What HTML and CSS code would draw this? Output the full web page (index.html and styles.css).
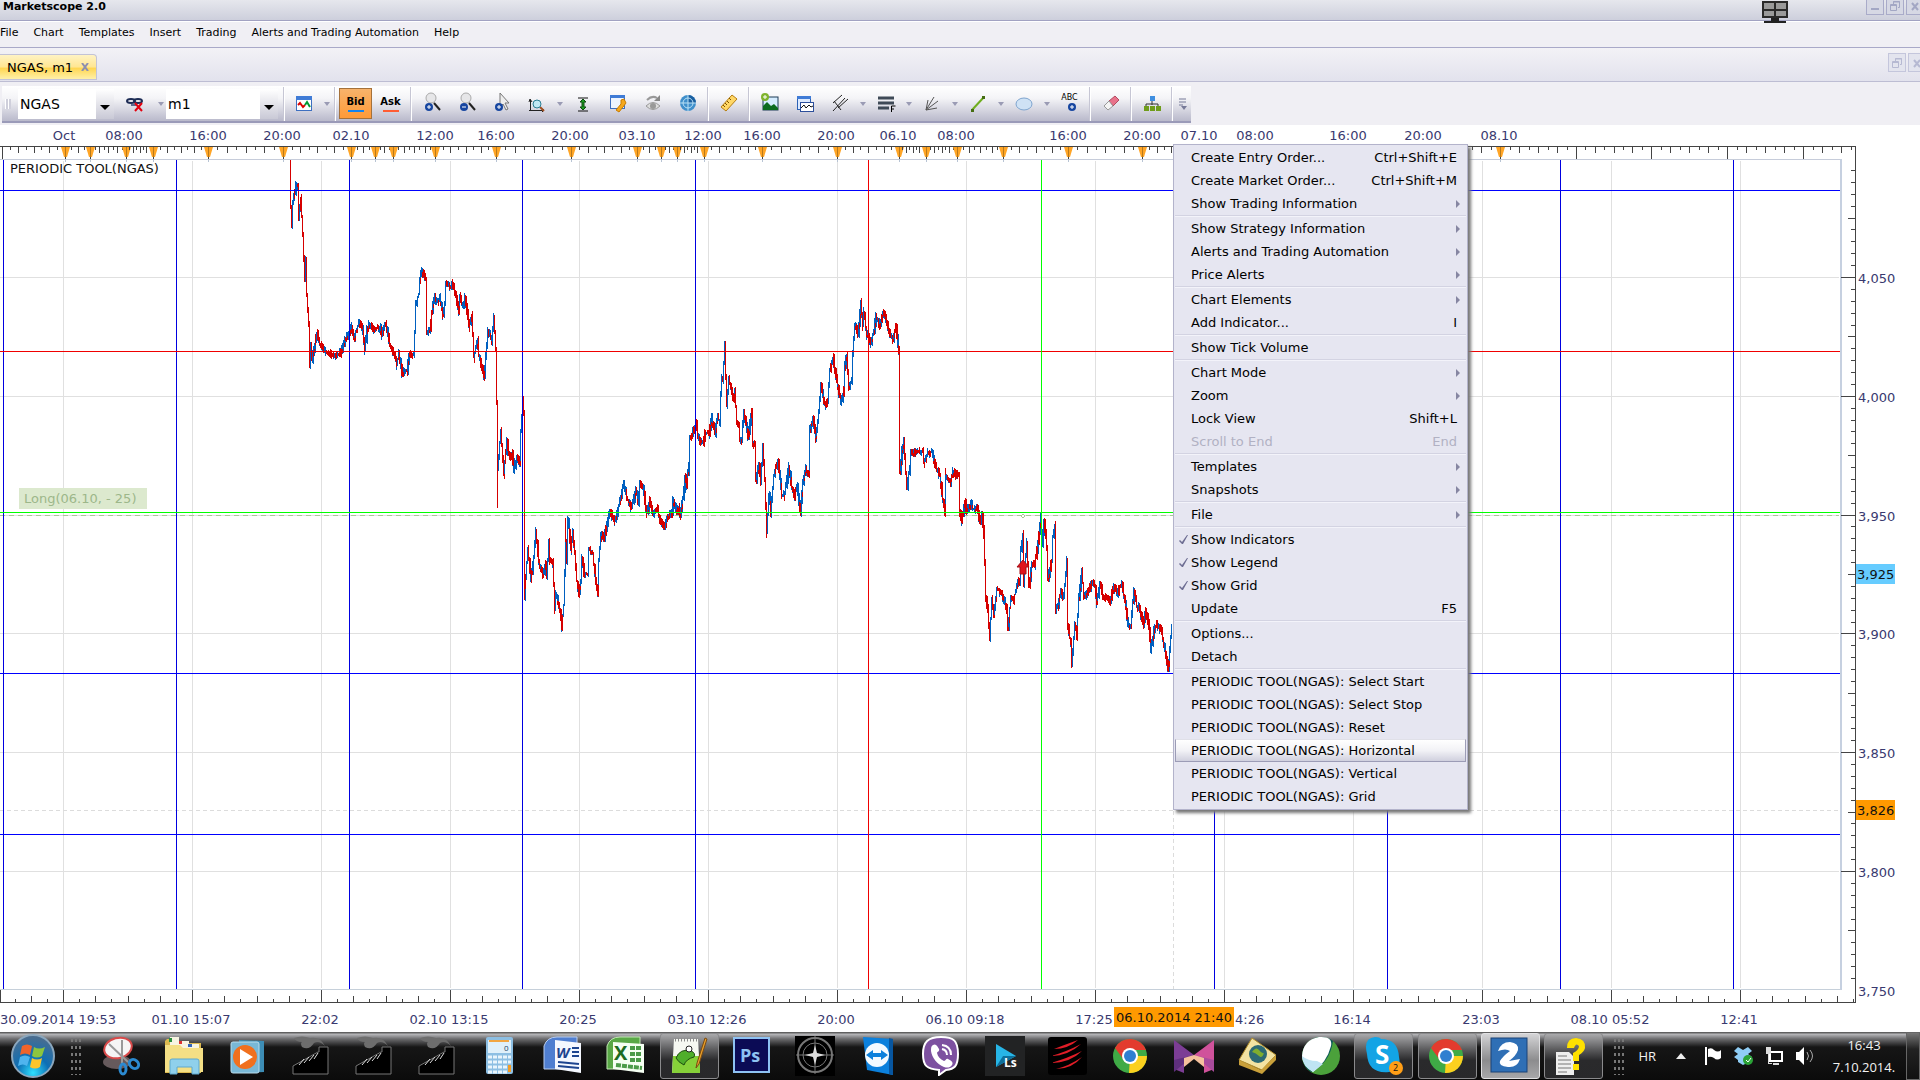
FILE: index.html
```html
<!DOCTYPE html>
<html lang="en">
<head>
  <meta charset="UTF-8" />
  <meta name="viewport" content="width=device-width, initial-scale=1" />
  <title>Marketscope 2.0</title>
  <link rel="stylesheet" href="styles.css">
</head>
<body>

<header class="titlebar">
  <h1>Marketscope 2.0</h1>
  <svg class="monitor" width="26" height="24" viewBox="0 0 26 24">
    <rect x="0" y="1" width="26" height="17" fill="#2a2a2a"/>
    <path d="M2 3h10v6H2zM14 3h10v6H14zM2 11h10v5H2zM14 11h10v5H14z" fill="#9a9a9a"/>
    <path d="M9 18h8v3h7v2H2v-2h7z" fill="#222"/>
  </svg>
  <div class="win-buttons">
    <button aria-label="Minimize"><svg width="12" height="12"><path d="M2 8h8v2H2z" fill="#a3a7c4"/></svg></button>
    <button aria-label="Restore"><svg width="12" height="12" fill="none" stroke="#a3a7c4"><path d="M4.500 4V1.500h6v6H9M4 2h7M1.500 4.500h6v6h-6zM1 5.500h7"/></svg></button>
    <button aria-label="Close"><svg width="12" height="12"><path d="M3 3l6 7M9 3l-6 7" stroke="#a3a7c4" stroke-width="2"/></svg></button>
  </div>
</header>

<nav class="menubar">
  <a href="#">File</a>
  <a href="#">Chart</a>
  <a href="#">Templates</a>
  <a href="#">Insert</a>
  <a href="#">Trading</a>
  <a href="#">Alerts and Trading Automation</a>
  <a href="#">Help</a>
</nav>

<div class="tabs">
  <div class="tab">
    <span>NGAS, m1</span>
    <button aria-label="Close tab"><svg width="8" height="8"><path d="M1 0l6 8M7 0L1 8" stroke="#8d8fae" stroke-width="2"/></svg></button>
  </div>
  <div class="win-buttons faded">
    <button aria-label="Restore chart"><svg width="12" height="12" fill="none" stroke="#b6b9d2"><path d="M4.500 4V1.500h6v6H9M4 2h7M1.500 4.500h6v6h-6zM1 5.500h7"/></svg></button>
    <button aria-label="Close chart"><svg width="12" height="12"><path d="M3 3l6 7M9 3l-6 7" stroke="#b6b9d2" stroke-width="2"/></svg></button>
  </div>
</div>

<div class="toolbar-row">
  <div class="toolbar">
    <span class="grip"></span>
    <select class="symbol" aria-label="Symbol"><option>NGAS</option></select>
    <button class="tool link" aria-label="Unlink"><svg width="24" height="24" viewBox="0 0 24 24">
      <g fill="none" stroke="#1d2c55" stroke-width="2"><ellipse cx="8" cy="9" rx="4" ry="2"/><ellipse cx="15" cy="9" rx="4" ry="2"/><path d="M8 13h6" stroke="#5a6a90"/></g>
      <path d="M12 11l7 8M19 11l-7 8" stroke="#e3000f" stroke-width="2"/></svg></button>
    <button class="drop" aria-label="Link options"></button>
    <select class="period" aria-label="Period"><option>m1</option></select>
    <span class="sep wide"></span>
    <button class="tool" aria-label="Chart type"><svg width="24" height="24" viewBox="0 0 24 24">
      <rect x="4.500" y="4.500" width="15" height="14" fill="#fff" stroke="#3d6fc0"/><path d="M4 4h16v4H4z" fill="#3f7bd6"/>
      <path d="M6 13l2-2 3 4 2-2" fill="none" stroke="#d00" stroke-width="2"/><path d="M13 13l2-3 3 5" fill="none" stroke="#093" stroke-width="2"/></svg></button>
    <button class="drop" aria-label="Chart type options"></button>
    <span class="sep"></span>
    <button class="price bid">Bid</button>
    <button class="price ask">Ask</button>
    <span class="sep"></span>
    <button class="tool" aria-label="Zoom in"><svg width="24" height="24" viewBox="0 0 24 24">
      <path d="M14 11l6 7" stroke="#222" stroke-width="2"/><circle cx="11" cy="6" r="5" fill="#e6e6e8" stroke="#aaa"/>
      <circle cx="9" cy="15" r="4" fill="#1746a0"/><path d="M7 15h4M9 13v4" stroke="#fff"/></svg></button>
    <button class="tool" aria-label="Zoom out"><svg width="24" height="24" viewBox="0 0 24 24">
      <path d="M14 11l6 7" stroke="#222" stroke-width="2"/><circle cx="11" cy="6" r="5" fill="#e6e6e8" stroke="#aaa"/>
      <circle cx="9" cy="15" r="4" fill="#1746a0"/><path d="M7 15h4" stroke="#fff"/></svg></button>
    <button class="tool" aria-label="Select"><svg width="24" height="24" viewBox="0 0 24 24">
      <path d="M10 1v14l3-3 3 6 2-1-3-6h4z" fill="#eee" stroke="#777"/>
      <circle cx="9" cy="15" r="4" fill="#1746a0"/><path d="M7 15h4M9 13v4" stroke="#fff"/></svg></button>
    <button class="tool" aria-label="Scale"><svg width="24" height="24" viewBox="0 0 24 24">
      <path d="M5.500 8v11M4 10l1-3 2 3M4 18.500h14M17 17l2 1-2 2" fill="none" stroke="#222"/>
      <path d="M15 15l4 4" stroke="#a05020" stroke-width="2"/><circle cx="12" cy="12" r="4" fill="#bfe8f4" stroke="#2b7f94"/></svg></button>
    <button class="drop" aria-label="Scale options"></button>
    <button class="tool" aria-label="Fit height"><svg width="24" height="24" viewBox="0 0 24 24">
      <path d="M7 6h10M7 19h10" stroke="#111"/><path d="M12 7l3 3h-2v5h2l-3 3-3-3h2v-5H9z" fill="#1d9a22" stroke="#0b4d0d"/></svg></button>
    <button class="tool" aria-label="Properties"><svg width="24" height="24" viewBox="0 0 24 24">
      <rect x="4.500" y="3.500" width="14" height="13" fill="#eef5ff" stroke="#3d6fc0"/><path d="M4 3h15v3H4z" fill="#3f7bd6"/>
      <path d="M10 18l5-6V8l3-1 2 4-3 4-4 5z" fill="#f5a81c" stroke="#c97c00"/></svg></button>
    <button class="tool" aria-label="Show or hide"><svg width="24" height="24" viewBox="0 0 24 24">
      <path d="M5 14q7-7 14 0-7 7-14 0z" fill="#ddd" stroke="#999"/><circle cx="12" cy="14" r="3" fill="#999"/>
      <path d="M6 8q5-5 10-2" fill="none" stroke="#999" stroke-width="2"/><path d="M19 3v6h-6z" fill="#888"/></svg></button>
    <button class="tool" aria-label="Web"><svg width="24" height="24" viewBox="0 0 24 24">
      <circle cx="12" cy="11" r="8" fill="#3f8fcb"/><path d="M12 3a8 8 0 0 1 8 8h-8z" fill="#1a5fa0"/>
      <g fill="none" stroke="#b8e0f5"><circle cx="12" cy="11" r="5"/><path d="M4 11h16M12 3v16"/></g></svg></button>
    <span class="sep"></span>
    <button class="tool" aria-label="Ruler"><svg width="24" height="24" viewBox="0 0 24 24">
      <path d="M15 3l5 4L9 19l-5-4z" fill="#ffd766" stroke="#b57d12"/><path d="M12 6l2 2M10 9l2 2M8 11l2 2M6 13l2 2" stroke="#7b5200"/></svg></button>
    <span class="sep"></span>
    <button class="tool" aria-label="Add picture"><svg width="24" height="24" viewBox="0 0 24 24">
      <rect x="5" y="5" width="15" height="13" fill="#d5ecff" stroke="#1c3a55"/><path d="M5 18v-4l4-4 4 4 3-2 4 4v2z" fill="#0b6b1f"/>
      <circle cx="7" cy="5" r="4" fill="#7fb32d"/><path d="M5 5h4M7 3v4" stroke="#fff"/></svg></button>
    <button class="tool" aria-label="Add indicator"><svg width="24" height="24" viewBox="0 0 24 24">
      <rect x="4.500" y="4.500" width="13" height="13" fill="#dceaff" stroke="#2c61b5"/><path d="M4 4h14v3H4z" fill="#3f7bd6"/>
      <rect x="7.500" y="10.500" width="13" height="9" fill="#fff" stroke="#2c4f9b"/><path d="M8 16l3-3 2 3 3-3 2 2 2-1" fill="none" stroke="#111"/></svg></button>
    <button class="tool" aria-label="Pitchfork"><svg width="24" height="24" viewBox="0 0 24 24">
      <path d="M5 11L14 3M10 16L20 7M5 19L17 6M6 9l7 9" stroke="#222"/></svg></button>
    <button class="drop" aria-label="Pitchfork options"></button>
    <button class="tool" aria-label="Fibonacci"><svg width="24" height="24" viewBox="0 0 24 24">
      <path d="M4 6h16M4 11h16M4 16h11" stroke="#3f4a57" stroke-width="3"/><path d="M17.500 20v-6h4M17 17h3" fill="none" stroke="#000"/></svg></button>
    <button class="drop" aria-label="Fibonacci options"></button>
    <button class="tool" aria-label="Fan"><svg width="24" height="24" viewBox="0 0 24 24">
      <path d="M6 18L8 8M6 18l8-13M6 18l12-9M6 18l11-2" stroke="#555"/></svg></button>
    <button class="drop" aria-label="Fan options"></button>
    <button class="tool" aria-label="Line"><svg width="24" height="24" viewBox="0 0 24 24">
      <path d="M6 18L18 5" stroke="#6fae1e" stroke-width="2"/><path d="M5 17h3v3H5zM16 4h3v3h-3z" fill="#456d12"/></svg></button>
    <button class="drop" aria-label="Line options"></button>
    <button class="tool" aria-label="Ellipse"><svg width="24" height="24" viewBox="0 0 24 24">
      <ellipse cx="12" cy="12" rx="8" ry="6" fill="#cfe2f5" stroke="#7fa5cf"/></svg></button>
    <button class="drop" aria-label="Ellipse options"></button>
    <button class="tool abc" aria-label="Label"><span>ABC</span><svg width="12" height="12" viewBox="0 0 12 12">
      <circle cx="8" cy="5" r="4" fill="#1746a0"/><path d="M6 5h4M8 3v4" stroke="#fff"/></svg></button>
    <span class="sep"></span>
    <button class="tool" aria-label="Eraser"><svg width="24" height="24" viewBox="0 0 24 24">
      <path d="M10 9l6-5 4 4-6 6z" fill="#e8728a" stroke="#b34a60"/><path d="M10 9l4 5-5 4-4-4z" fill="#f4f4f4" stroke="#999"/></svg></button>
    <span class="sep"></span>
    <button class="tool" aria-label="Tree"><svg width="24" height="24" viewBox="0 0 24 24">
      <path d="M12 7v6M6 15v-3h12v3" fill="none" stroke="#333"/><path d="M10 4h5v5h-5z" fill="#3f8fe0"/>
      <path d="M4 14h5v5H4zM10 14h5v5h-5zM16 14h5v5h-5z" fill="#6f9c1b"/></svg></button>
    <span class="sep"></span>
    <button class="overflow" aria-label="More"><svg width="10" height="14"><path d="M1 2h7M1 5h7M1 8h4" stroke="#777a98"/><path d="M3 9h6l-3 4z" fill="#777a98"/></svg></button>
  </div>
</div>

<main class="chart">
  <svg id="chart" viewBox="0 125 1920 907" preserveAspectRatio="xMinYMin"></svg>

  <ul class="context-menu">
    <li><button>Create Entry Order...<kbd>Ctrl+Shift+E</kbd></button></li>
    <li><button>Create Market Order...<kbd>Ctrl+Shift+M</kbd></button></li>
    <li class="sub"><button>Show Trading Information</button></li>
    <li class="sub line"><button>Show Strategy Information</button></li>
    <li class="sub"><button>Alerts and Trading Automation</button></li>
    <li class="sub"><button>Price Alerts</button></li>
    <li class="sub line"><button>Chart Elements</button></li>
    <li><button>Add Indicator...<kbd>I</kbd></button></li>
    <li class="line"><button>Show Tick Volume</button></li>
    <li class="sub line"><button>Chart Mode</button></li>
    <li class="sub"><button>Zoom</button></li>
    <li><button>Lock View<kbd>Shift+L</kbd></button></li>
    <li><button disabled>Scroll to End<kbd>End</kbd></button></li>
    <li class="sub line"><button>Templates</button></li>
    <li class="sub"><button>Snapshots</button></li>
    <li class="sub line"><button>File</button></li>
    <li class="line"><button><svg class="check" width="10" height="10"><path d="M0 6l1-1 2 2 5-7h1L4 9H3z" fill="#6d6d92"/></svg>Show Indicators</button></li>
    <li><button><svg class="check" width="10" height="10"><path d="M0 6l1-1 2 2 5-7h1L4 9H3z" fill="#6d6d92"/></svg>Show Legend</button></li>
    <li><button><svg class="check" width="10" height="10"><path d="M0 6l1-1 2 2 5-7h1L4 9H3z" fill="#6d6d92"/></svg>Show Grid</button></li>
    <li><button>Update<kbd>F5</kbd></button></li>
    <li class="line"><button>Options...</button></li>
    <li><button>Detach</button></li>
    <li class="line"><button>PERIODIC TOOL(NGAS): Select Start</button></li>
    <li><button>PERIODIC TOOL(NGAS): Select Stop</button></li>
    <li><button>PERIODIC TOOL(NGAS): Reset</button></li>
    <li><button class="active">PERIODIC TOOL(NGAS): Horizontal</button></li>
    <li><button>PERIODIC TOOL(NGAS): Vertical</button></li>
    <li><button>PERIODIC TOOL(NGAS): Grid</button></li>
  </ul>
</main>

<footer class="taskbar">
  <button class="start" aria-label="Start"><svg width="46" height="46" viewBox="0 0 46 46">
    <defs><radialGradient id="orb" cx="50%" cy="90%" r="85%"><stop offset="0" stop-color="#2fe0ff"/><stop offset=".45" stop-color="#0d6fb5"/><stop offset="1" stop-color="#4a6d8f"/></radialGradient></defs>
    <circle cx="23" cy="23" r="21" fill="url(#orb)" stroke="#8ba7bd" stroke-width="2"/>
    <path d="M12 13q5-3 10 0l-2 9q-5-3-10 0z" fill="#f0642a"/><path d="M24 14q5 3 11 0l-3 9q-5 3-10 0z" fill="#8cc63e"/>
    <path d="M10 24q5-3 10 0l-3 9q-4-3-9 0z" fill="#4fb4ee"/><path d="M22 25q5 3 10 0l-2 9q-5 3-10 0z" fill="#fcc52b"/></svg></button>
  <span class="dots"></span>
  <div class="apps">
    <button aria-label="Snipping Tool"><svg width="40" height="40" viewBox="0 0 40 40">
      <ellipse cx="16" cy="26" rx="14" ry="7" fill="#665a5c"/><ellipse cx="17" cy="12" rx="14" ry="10" fill="#f5f5f5" stroke="#d84a4a" stroke-width="2" transform="rotate(-15 17 12)"/>
      <path d="M8 8l19 18M21 4l0 24" stroke="#999" stroke-width="2"/><g fill="none" stroke="#2c8ad0" stroke-width="3"><ellipse cx="22" cy="33" rx="3" ry="5"/><ellipse cx="33" cy="28" rx="5" ry="4" transform="rotate(40 33 28)"/></g></svg></button>
    <button aria-label="Explorer"><svg width="40" height="40" viewBox="0 0 40 40">
      <path d="M3 3h10l2 4h22v30H1V5z" fill="#ddba50"/><path d="M6 1h9v4h10v3h10v5H6z" fill="#f7f4e2"/><path d="M5 2h3v4H5z" fill="#2a8f3c"/><path d="M15 5h3v3h-3z" fill="#d33"/><path d="M24 8h4v3h-4z" fill="#36b"/>
      <path d="M1 9h15l3 3h20v24H1z" fill="#f4df85"/><path d="M6 38V25q0-2 2-2h25q2 0 2 2v13h-7v-7H13v7z" fill="#8fd0ec" stroke="#5fa9ce"/></svg></button>
    <button aria-label="Media Player"><svg width="40" height="40" viewBox="0 0 40 40">
      <path d="M12 4l25 1v31l-25 1z" fill="#3d8db5"/><rect x="4" y="6" width="28" height="31" rx="2" fill="#79b8d6" stroke="#b9dcec"/>
      <circle cx="18" cy="21" r="12" fill="#f0701e"/><path d="M13 13l13 8-13 8z" fill="#fff"/></svg></button>
    <button aria-label="Strategy 1"><svg width="40" height="40" viewBox="0 0 40 40"><path d="M3 38V30l25-14h1v-5h9v27z" fill="#000" stroke="#777"/><path d="M9 29l5-6M14 27l5-6M19 25l5-6M24 23l4-6" stroke="#ddd"/><path d="M4 2q8-3 16 0 10-2 15 8-6-6-11-3-5 8-12 4-2-4 0-5-6 0-8-4z" fill="#6d6d6d"/></svg></button>
    <button aria-label="Strategy 2"><svg width="40" height="40" viewBox="0 0 40 40"><path d="M3 38V30l25-14h1v-5h9v27z" fill="#000" stroke="#777"/><path d="M9 29l5-6M14 27l5-6M19 25l5-6M24 23l4-6" stroke="#ddd"/><path d="M4 2q8-3 16 0 10-2 15 8-6-6-11-3-5 8-12 4-2-4 0-5-6 0-8-4z" fill="#6d6d6d"/></svg></button>
    <button aria-label="Strategy 3"><svg width="40" height="40" viewBox="0 0 40 40"><path d="M3 38V30l25-14h1v-5h9v27z" fill="#000" stroke="#777"/><path d="M9 29l5-6M14 27l5-6M19 25l5-6M24 23l4-6" stroke="#ddd"/><path d="M4 2q8-3 16 0 10-2 15 8-6-6-11-3-5 8-12 4-2-4 0-5-6 0-8-4z" fill="#6d6d6d"/></svg></button>
    <button aria-label="Calculator"><svg width="40" height="40" viewBox="0 0 40 40">
      <rect x="6" y="1" width="27" height="37" rx="2" fill="#8dbfe3"/><rect x="8" y="4" width="23" height="13" fill="#dff0fa"/><path d="M9 4h20v2H9z" fill="#f2a641"/><text x="24" y="15" class="glyph" font-size="8" fill="#246">0</text>
      <path d="M8 21h23M8 26h23M8 31h19M8 36h19" stroke="#e9f5fc" stroke-width="3" stroke-dasharray="4 1"/><path d="M28 29h3v7h-3z" fill="#f59b22"/></svg></button>
    <button aria-label="Word"><svg width="40" height="40" viewBox="0 0 40 40">
      <path d="M1 33V10Q4 1 14 1h20v32z" fill="#4f7ed0" stroke="#b9cef0"/><path d="M12 4l26 3v30l-26-4z" fill="#f5f8ff"/><text x="13" y="22" class="glyph" font-size="15" font-weight="bold" font-style="italic" fill="#1d448f">W</text>
      <path d="M29 12h7M29 16h7M29 20h7M15 26l21 2M15 30l21 2" stroke="#1d448f" stroke-width="2"/></svg></button>
    <button aria-label="Excel"><svg width="40" height="40" viewBox="0 0 40 40">
      <path d="M1 33V10Q4 1 14 1h20v32z" fill="#59a846" stroke="#c3e8b5"/><path d="M7 6l31 2v29L7 33z" fill="#f5fff2"/><text x="8" y="24" class="glyph" font-size="20" font-weight="bold" fill="#1c6b1f">X</text>
      <path d="M24 12h12M24 18h12M24 24h12M10 29l26 3" stroke="#4b9b48" stroke-width="4" stroke-dasharray="5 1"/></svg></button>
    <button class="open" aria-label="Notepad++"><svg width="40" height="40" viewBox="0 0 40 40">
      <path d="M5 3h24l2 34H3z" fill="#f6f8f2"/><path d="M4 20h27v17H3z" fill="#86d139"/><path d="M6 4h22" stroke="#888" stroke-width="3" stroke-dasharray="1 2"/>
      <path d="M7 22q4-10 15-7 5 2 3 6-8 2-10 8-6-3-8-7z" fill="#4fae2b" stroke="#1e4d10"/><circle cx="20" cy="13" r="3" fill="#fff" stroke="#222"/><path d="M36 2L28 27l-1 5 3-4L38 3z" fill="#e9a02b" stroke="#7a4a12"/></svg></button>
    <button aria-label="Photoshop"><svg width="40" height="40" viewBox="0 0 40 40"><rect x="2" y="2" width="35" height="34" fill="#0b0b55" stroke="#8ec2f2" stroke-width="2"/><text x="8" y="26" class="glyph" font-size="18" font-weight="bold" fill="#8ec2f2">Ps</text></svg></button>
    <button aria-label="Compass"><svg width="40" height="40" viewBox="0 0 40 40"><path d="M0 0h40v40H0z" fill="#000"/><g fill="none" stroke="#777"><circle cx="20" cy="19" r="17" stroke-width="2"/><circle cx="20" cy="19" r="12"/><path d="M20 0v38M1 19h38"/></g><path d="M20 9l2 8 8 2-8 2-2 8-2-8-8-2 8-2z" fill="#ddd"/></svg></button>
    <button aria-label="TeamViewer"><svg width="40" height="40" viewBox="0 0 40 40"><path d="M4 1l30 2v36l-26-5z" fill="#0c80dc"/><path d="M30 2l4 1v36l-4-1z" fill="#0756a0"/><circle cx="18" cy="19" r="12" fill="#f4faff"/><path d="M7 19l7-5v3h8v-3l7 5-7 5v-3h-8v3z" fill="#0c80dc"/></svg></button>
    <button aria-label="Viber"><svg width="40" height="40" viewBox="0 0 40 40"><path d="M19 1c13 0 17 4 17 17s-4 15-12 16l-7 5v-5C5 33 1 30 1 18S6 1 19 1z" fill="#7d51a0" stroke="#fff" stroke-width="2"/><path d="M11 9c3-2 5 2 6 4s-2 3-2 4c1 4 3 6 7 8 2 0 2-3 4-2s6 3 4 6-5 3-8 2c-7-3-12-9-13-16 0-3 0-5 2-6z" fill="#fff"/><path d="M20 9q9 1 9 10M20 13q5 1 5 6" fill="none" stroke="#fff" stroke-width="2"/></svg></button>
    <button aria-label="LS"><svg width="40" height="40" viewBox="0 0 40 40"><path d="M0 0h40v40H0z" fill="#222324"/><path d="M11 8l20 12-20 11z" fill="#27b5e6"/><path d="M11 31l7-11 13 0z" fill="#0d6f9b"/><text x="19" y="31" class="glyph" font-size="12" font-weight="bold" fill="#fff">Ls</text></svg></button>
    <button aria-label="Claws"><svg width="40" height="40" viewBox="0 0 40 40"><rect y="1" width="39" height="38" rx="3" fill="#000"/><path d="M6 13q10-4 24-9-10 9-24 9zM3 20q15-4 30-12-13 12-30 12zM3 27q17-5 31-12-12 12-31 12zM8 33q13-3 26-12-10 12-26 12z" fill="#e11d27"/></svg></button>
    <button aria-label="Chrome"><svg width="40" height="40" viewBox="0 0 40 40"><circle cx="19" cy="20" r="17" fill="#3faa46"/><path d="M19 20h17a17 17 0 0 1-18 17z" fill="#fbd01e"/><path d="M4 12a17 17 0 0 1 31 2H19L13 24z" fill="#e33b2e"/><circle cx="19" cy="20" r="8" fill="#fff"/><circle cx="19" cy="20" r="6" fill="#2f7fd0"/></svg></button>
    <button aria-label="M"><svg width="40" height="40" viewBox="0 0 40 40"><path d="M0 4l20 15-10 9v9L0 33z" fill="#7c3d95"/><path d="M40 4L20 19l10 9v9l10-4z" fill="#d0529b"/><path d="M0 24l20-5L0 36z" fill="#5f2f7d"/><path d="M40 24l-20-5 20 17z" fill="#a94b9c"/><path d="M10 22l10-3 10 3v9l-10-8-10 8z" fill="#f5c19d"/></svg></button>
    <button aria-label="Maps"><svg width="40" height="40" viewBox="0 0 40 40"><path d="M1 24L14 2l24 17-14 15z" fill="#f3e3a3" stroke="#b08c2a"/><path d="M1 24l22 10 15-15v5L24 38 1 29z" fill="#c9a03a"/><circle cx="20" cy="18" r="9" fill="#2d6a74"/><path d="M14 16q4-6 7-2t5 3q-2 6-5 3t-7-4z" fill="#7fae2f"/></svg></button>
    <button aria-label="Webex"><svg width="40" height="40" viewBox="0 0 40 40"><circle cx="20" cy="20" r="19" fill="#4ba13b"/><path d="M20 1a19 19 0 0 0-10 35q19-9 22-31A19 19 0 0 0 20 1z" fill="#0c5a58"/><path d="M18 1q14-1 12 9-4 16-18 26Q1 29 1 20 2 4 18 1z" fill="#fff"/><path d="M1 20q6 5 15 5l6 3-10 8Q2 31 1 20z" fill="#bfe4f3"/></svg></button>
    <button class="open" aria-label="Skype"><svg width="40" height="40" viewBox="0 0 40 40"><path d="M11 1q5 0 6 2 17 0 18 18 3 15-10 15Q4 38 3 18-1 2 11 1z" fill="#13a4e5"/><text x="11" y="28" class="glyph" font-size="26" font-weight="bold" fill="#fff">S</text><circle cx="32" cy="32" r="7" fill="#ff9e16"/><text x="29" y="35" class="glyph" font-size="9" fill="#111">2</text></svg></button>
    <button class="open" aria-label="Chrome window"><svg width="40" height="40" viewBox="0 0 40 40"><circle cx="19" cy="20" r="17" fill="#3faa46"/><path d="M19 20h17a17 17 0 0 1-18 17z" fill="#fbd01e"/><path d="M4 12a17 17 0 0 1 31 2H19L13 24z" fill="#e33b2e"/><circle cx="19" cy="20" r="8" fill="#fff"/><circle cx="19" cy="20" r="6" fill="#2f7fd0"/></svg></button>
    <button class="open current" aria-label="Trading Station"><svg width="40" height="40" viewBox="0 0 40 40"><rect x="1" y="2" width="36" height="34" fill="#2f6fb5" stroke="#1b4377"/><path d="M8 15q3-9 12-9 9 1 8 8-2 6-9 11l11-2q-3 9-12 8-10-1-8-6 3-5 10-10-4-3-12 0z" fill="#fff"/></svg></button>
    <button class="open" aria-label="Help document"><svg width="40" height="40" viewBox="0 0 40 40"><path d="M3 16h13l5 5v18H3z" fill="#eee"/><path d="M5 20h9M5 24h13M5 28h13M5 32h13M5 36h9" stroke="#777"/><path d="M14 12q0-10 9-10 10 1 9 10-1 4-6 7v6h-6v-8q6-3 6-7-3-4-5 2z" fill="#ffe100"/><path d="M20 28h6v6h-6z" fill="#ffe100"/></svg></button>
  </div>
  <span class="dots"></span>
  <div class="tray">
    <span class="lang">HR</span>
    <svg class="up" width="10" height="6"><path d="M5 0l5 6H0z" fill="#eee"/></svg>
    <svg width="18" height="20"><path d="M1 1h2v18H1zM4 3q4-2 6 1 4 3 7 0v8q-4 3-7 0-3-2-6-1z" fill="#fff"/></svg>
    <svg width="20" height="20"><path d="M5 1l5 3 5-3 4 4-4 3 4 3-5 3 0 3-4 2-5-3v-2l-4-3 4-3-4-3z" fill="#8fcdf5"/><circle cx="15" cy="14" r="5" fill="#2aa336"/><path d="M13 14l2 2 3-4" fill="none" stroke="#fff"/></svg>
    <svg width="20" height="20"><rect x="6" y="6" width="12" height="9" fill="#111" stroke="#fff" stroke-width="2"/><path d="M9 17h6v2H9zM2 1h5v7H5v9h3v1H4V8H2z" fill="#ddd"/></svg>
    <svg width="20" height="20"><path d="M1 6h3l5-5v18l-5-5H1z" fill="#fff"/><path d="M12 6q3 4 0 8M15 4q5 6 0 12" fill="none" stroke="#aaa"/></svg>
    <div class="clock">16:43<br>7.10.2014.</div>
  </div>
  <button class="desktop" aria-label="Show desktop"></button>
</footer>

<script src="chart.js"></script>
</body>
</html>
```
FILE: styles.css
```css
* { box-sizing: border-box; }

body {
  margin: 0;
  height: 100vh;
  display: flex;
  flex-direction: column;
  overflow: hidden;
  background: #f0eff4;
  color: #000;
  font-family: 'DejaVu Sans', Verdana, sans-serif;
  font-size: 13px;
}

button, select {
  font: inherit;
  color: inherit;
  border: none;
  padding: 0;
  background: none;
}

svg { display: block; }

.titlebar {
  position: relative;
  display: flex;
  justify-content: space-between;
  height: 21px;
  padding-left: 3px;
  background: linear-gradient(#e6e7ed, #cdcfdc);
  border-bottom: 1px solid #a2a2c2;
  box-shadow: 0 1px 0 #fff;
}

.titlebar h1 {
  margin: 0;
  font-size: 11px;
  line-height: 13px;
}

.monitor {
  position: absolute;
  top: 0;
  right: 132px;
}

.win-buttons {
  display: flex;
  gap: 2px;
  margin-right: -4px;
}

.win-buttons button {
  width: 18px;
  height: 15px;
  display: flex;
  justify-content: center;
  background: #d6d8e4;
  border: 1px solid #a9abc9;
  border-top: none;
}

.win-buttons.faded {
  padding-top: 5px;
  margin-right: -6px;
}

.win-buttons.faded button {
  height: 19px;
  align-items: center;
  background: #e3e4ee;
  border: 1px solid #c4c6dc;
}

.menubar {
  display: flex;
  gap: 15px;
  height: 27px;
  padding-top: 5px;
  border-bottom: 1px solid #a9a9c8;
  font-size: 11px;
  line-height: 13px;
}

.menubar a {
  color: #000;
  text-decoration: none;
}

.tabs {
  display: flex;
  justify-content: space-between;
  height: 34px;
  background: linear-gradient(#f3f2f6, #e2e2ed);
  border-bottom: 1px solid #bdbdd3;
}

.tab {
  display: flex;
  align-items: center;
  gap: 8px;
  width: 97px;
  height: 26px;
  margin-top: 6px;
  padding-left: 7px;
  background: linear-gradient(#fff3c4, #ffe692 50%, #ffd651 55%, #fff0a8);
  border: 1px solid #c3c3d6;
  border-left: none;
  border-radius: 0 4px 0 0;
}

.toolbar-row {
  height: 43px;
  padding: 4px 2px;
}

.toolbar {
  display: flex;
  align-items: center;
  width: 1189px;
  height: 37px;
  background: linear-gradient(#fff, #f4f4f7 35%, #b9b9cb);
  border-bottom: 2px solid #9a9ab8;
}

.grip {
  width: 16px;
  height: 10px;
  background: repeating-linear-gradient(90deg, #fff 0 1px, #cfcfdb 1px 3px) 3px 0 / 6px 10px no-repeat;
}

.toolbar select {
  appearance: none;
  height: 30px;
  padding-left: 2px;
  border-radius: 0;
  font-size: 14px;
  background-color: #fff;
  background-image:
    url("data:image/svg+xml,%3Csvg xmlns='http://www.w3.org/2000/svg' width='10' height='5'%3E%3Cpath d='M0 0h10L5 5z'/%3E%3C/svg%3E"),
    linear-gradient(#fff, #c9c9d6);
  background-position: right 4px top 16px, right;
  background-size: 10px 5px, 18px 100%;
  background-repeat: no-repeat;
}

.toolbar .symbol { width: 96px; }
.toolbar .period { width: 112px; }

.tool {
  flex: none;
  width: 35px;
  height: 30px;
  display: flex;
  justify-content: center;
  align-items: center;
}

.tool.link { width: 41px; }

.drop {
  flex: none;
  width: 11px;
  height: 30px;
  display: flex;
  align-items: center;
  justify-content: center;
}

.drop::before {
  content: "";
  border: 3px solid transparent;
  border-top: 4px solid #9a9bb4;
  border-bottom: none;
}

.sep {
  flex: none;
  width: 6px;
  height: 34px;
  background: linear-gradient(90deg, #c6c6d4 50%, #fff 50%) 2px 0 / 2px 100% no-repeat;
}

.sep.wide {
  width: 8px;
  background-position: 5px 0;
}

.price {
  flex: none;
  width: 33px;
  height: 31px;
  margin: 0 1px;
  font-size: 10px;
  font-weight: bold;
  line-height: 12px;
}

.price::after {
  content: "";
  display: block;
  width: 16px;
  height: 2px;
  margin: 2px auto 0;
}

.bid {
  background: linear-gradient(#f7b36b, #ff9a38);
  border: 1px solid #a5713a;
}

.bid::after { background: #1283f0; }
.ask::after { background: #ff5c33; }

.abc {
  flex-direction: column;
  font-size: 8px;
  line-height: 9px;
}

.overflow {
  flex: 1;
  display: flex;
  justify-content: center;
}

.chart {
  position: relative;
  flex: 1;
  min-height: 0;
  background: #fff;
}

#chart { width: 100%; }

#chart text {
  font-size: 13px;
  fill: #39396f;
}

#chart .dark { fill: #111; }
#chart .position { fill: #9db78a; }

.context-menu {
  position: absolute;
  top: 19px;
  left: 1173px;
  width: 295px;
  margin: 0;
  padding: 1px;
  list-style: none;
  background: #e6e6f1;
  border: 1px solid #b3b3cb;
  box-shadow: 3px 3px 3px #777;
}

.context-menu .line {
  border-top: 1px solid #d3d3e2;
  box-shadow: inset 0 1px 0 #f3f3fa;
  padding-top: 1px;
}

.context-menu button {
  position: relative;
  display: flex;
  justify-content: space-between;
  align-items: center;
  width: 100%;
  height: 23px;
  padding: 0 8px 0 15px;
  border: 1px solid transparent;
  text-align: left;
}

.context-menu button:disabled { color: #b1b1c3; }

.context-menu kbd { font: inherit; }

.context-menu .active {
  background: linear-gradient(#fff, #f2f2f6 50%, #d0d0de);
  border: 1px solid #9c9cb6;
  border-top-color: #e0e0e8;
}

.context-menu .sub button::after {
  content: "";
  margin-right: -3px;
  border: 4px solid transparent;
  border-left: 4px solid #8686a2;
  border-right: none;
}

.check {
  position: absolute;
  left: 3px;
  top: 6px;
}

.taskbar {
  display: flex;
  align-items: center;
  height: 48px;
  background: linear-gradient(#606060 0 1px, #b9b9bc 2px, #6b6b6d 7px, #161616 15px, #0b0b0b);
  color: #f2f2f2;
  font-family: 'Open Sans', 'Segoe UI', sans-serif;
}

.start {
  width: 66px;
  display: flex;
  justify-content: center;
}

.dots {
  width: 11px;
  height: 38px;
  margin: 0 10px 0 4px;
  background: radial-gradient(#777 1px, transparent 1px) 0 0 / 4px 7px;
}

.apps {
  flex: none;
  width: 1512px;
  display: flex;
  justify-content: space-between;
}

.apps button {
  width: 59px;
  height: 46px;
  display: flex;
  justify-content: center;
  align-items: center;
  border: 1px solid transparent;
  border-radius: 3px;
}

.apps .open {
  border-color: #8a8a8c;
  background: linear-gradient(#aaaaac, #5c5c5e 35%, #2a2a2c 60%, #29292b);
}

.apps .current {
  border-color: #e0e0e2;
  background: linear-gradient(#d4d4d6, #8c8c8e 60%, #a7a7a9);
}

.glyph { font-family: 'Open Sans', sans-serif; }

.apps + .dots { margin: 0 4px 0 10px; }

.tray {
  flex: 1;
  display: flex;
  align-items: center;
  justify-content: flex-end;
  gap: 11px;
  padding-right: 7px;
}

.lang { margin-right: 9px; }
.up { margin-right: 7px; }

.clock {
  width: 70px;
  margin-left: 3px;
  text-align: center;
  line-height: 22px;
}

.desktop {
  width: 14px;
  height: 48px;
  border: 1px solid #666;
  background: linear-gradient(#777, #222 35%, #111);
}
```
FILE: chart.js
```js
const chart = document.getElementById('chart');
const NS = 'http://www.w3.org/2000/svg';

function add(tag, attrs, text) {
  const el = document.createElementNS(NS, tag);
  for (const k in attrs) el.setAttribute(k, attrs[k]);
  if (text) el.textContent = text;
  chart.appendChild(el);
  return el;
}

function vline(x, y1, y2, color, width = 1) {
  add('rect', { x, y: y1, width, height: y2 - y1, fill: color });
}

function hline(y, x1, x2, color, height = 1) {
  add('rect', { x: x1, y, width: x2 - x1, height, fill: color });
}

function label(x, y, text, anchor = 'middle', cls = '') {
  add('text', { x, y, 'text-anchor': anchor, class: cls }, text);
}

// plot frame and grid
hline(159, 0, 1842, '#c6ccda');
hline(989, 0, 1842, '#c6d0da');
vline(1840, 159, 990, '#c6d0e0', 2);
for (let x = 63; x < 1841; x += 129) vline(x, 161, 988, '#e0e0e0');
[277, 396, 515, 633, 752, 871].forEach(y => hline(y, 0, 1839, '#e0e0e0'));

// open position and crosshair
add('path', { d: 'M0 515.5H1839', stroke: '#a9c795', 'stroke-dasharray': '5 4' });
add('path', { d: 'M0 810.5H1840M1173.5 160V989', stroke: '#dcdcdc', 'stroke-dasharray': '4 3', fill: 'none' });
add('path', { d: 'M1023 514l2 2-2 2-2-2z', stroke: '#a9c795', fill: '#fff' });

// price path, x and y of every swing
const swings = `290,160 290,190 292,225 293,201 296,185 298,184 299,218 301,198 303,235 305,280 306,258 307,294
309,325 310,365 311,345 312,358 314,348 317,333 320,343 325,351 333,354 338,355 341,350 345,338 349,333 352,325
354,337 359,322 362,326 365,348 367,329 369,324 374,328 380,326 382,333 386,323 390,345 394,353 397,363 399,353
402,371 407,370 409,354 414,354 415,330 416,304 419,293 420,277 422,269 426,277 427,331 430,330 433,302 435,296
437,302 440,296 443,315 445,304 446,283 451,287 453,283 456,297 459,312 460,294 463,307 465,297 469,326 472,315
474,356 478,339 479,355 484,377 487,345 488,330 492,341 494,315 496,347 497,403 497,506 498,467 500,443 501,430
504,472 507,441 510,457 512,452 514,469 517,457 520,462 521,431 523,398 524,413 524,597 526,577 528,549 531,578
534,558 536,530 538,553 540,565 543,575 546,563 547,575 549,541 550,561 553,562 555,609 556,593 559,605 562,625
564,605 565,573 565,521 567,560 568,518 571,548 573,531 575,553 577,580 579,592 581,582 582,557 584,573 588,573
589,548 593,553 595,573 598,594 599,560 601,533 604,538 607,522 610,510 615,521 619,505 624,483 627,498 632,507
636,487 639,503 640,482 643,488 647,513 650,500 653,513 657,507 660,520 664,526 668,516 672,511 673,500 677,510
679,507 680,513 683,498 685,477 687,484 689,462 690,438 693,431 696,423 699,440 703,442 705,432 709,432 712,416
715,432 718,414 720,424 721,392 722,377 723,381 725,342 726,377 727,405 729,378 733,398 735,390 737,421 739,423
740,440 742,438 744,410 748,437 752,408 753,445 755,442 756,480 759,463 761,482 763,445 765,478 767,533 768,515
769,495 771,513 774,474 778,462 782,495 785,492 789,465 792,486 794,496 797,485 800,512 803,482 806,468 809,476
810,428 813,417 816,438 819,413 821,385 824,402 828,402 830,370 833,357 836,377 838,387 841,402 844,389 845,363
847,354 849,388 852,378 853,352 855,324 858,334 861,301 863,326 864,311 867,333 871,343 874,329 876,315 879,324
884,311 887,321 889,330 893,340 896,325 898,346 899,349 899,450 900,470 902,450 904,440 907,487 910,465 911,450
915,452 923,450 924,462 928,452 932,451 935,465 940,474 942,492 945,513 945,472 950,481 953,471 959,475 960,512
962,520 965,500 966,511 971,503 973,508 977,507 980,522 982,515 984,535 985,563 986,598 988,610 990,638 992,597
994,615 997,588 1002,593 1007,610 1008,629 1011,597 1014,599 1018,580 1020,583 1021,550 1023,533 1024,585
1027,542 1029,586 1032,563 1035,565 1038,540 1041,515 1042,543 1044,520 1047,547 1048,577 1052,560 1053,537
1055,525 1056,610 1059,600 1061,590 1064,598 1067,560 1068,627 1071,643 1072,665 1075,623 1077,635 1079,597
1082,568 1084,597 1088,590 1094,580 1097,600 1100,583 1103,595 1110,600 1114,585 1117,593 1122,583 1126,607
1128,625 1131,625 1134,590 1137,605 1140,608 1143,623 1146,610 1149,627 1151,650 1154,630 1157,623 1162,630
1165,650 1168,668 1170,650 1172,625`.split(/\s+/).map(p => p.split(',').map(Number));

let seed = 7;
function rand() {
  seed = (seed * 16807) % 2147483647;
  return seed / 2147483647;
}

const UP = '#0060c0';
const DOWN = '#d60000';
const bars = { [UP]: '', [DOWN]: '' };
for (let i = 1; i < swings.length; i++) {
  const [x1, y1] = swings[i - 1];
  const [x2, y2] = swings[i];
  const steps = Math.max(1, x2 - x1);
  for (let s = 0; s < steps; s++) {
    const a = y1 + (y2 - y1) * s / steps;
    const b = y1 + (y2 - y1) * (s + 1) / steps;
    const flat = Math.abs(b - a) < 12;
    const up = flat && rand() < 0.25 ? b >= a : b < a;
    const color = up ? UP : DOWN;
    const other = up ? DOWN : UP;
    const x = x1 + s + 0.5;
    const top = Math.max(160, Math.round(Math.min(a, b) - rand() * 4));
    const bottom = Math.round(Math.max(a, b) + rand() * 4 + 1);
    bars[color] += `M${x} ${top}V${bottom}`;
    // bar bodies run into the next column, short wicks take the other colour
    if (flat && rand() < 0.6) bars[color] += `M${x + 1} ${top + 1}V${bottom + 1}`;
    if (flat && rand() < 0.5) bars[other] += `M${x} ${bottom - 3}v${3 + Math.round(rand() * 3)}`;
  }
}
for (const color in bars) {
  add('path', { d: bars[color], stroke: color, fill: 'none', 'shape-rendering': 'crispEdges' });
}
add('path', { d: 'M1023 560l6 7h-3v7h-6v-7h-3z', fill: '#e0141e', stroke: '#a31018' });

// periodic tool lines
[190, 673, 834].forEach(y => hline(y, 0, 1840, '#00f'));
[3, 176, 349, 522, 695, 1214, 1387, 1560, 1733].forEach(x => vline(x, 160, 989, '#0000e0'));
hline(351, 0, 1840, '#f00000');
vline(868, 160, 989, '#f00000');
hline(512, 0, 1840, '#0f0');
vline(1041, 160, 989, '#0f0');

// top time scale
hline(146, 0, 1856, '#444');
const marks = [2, 65, 90, 126, 153, 208, 283, 351, 375, 393, 435, 496, 571, 637, 661, 677, 704, 762, 837, 899,
  926, 957, 1003, 1068, 1142, 1200, 1227, 1256, 1300, 1349, 1424, 1500, 1576, 1651, 1727, 1803, 1879];
marks.forEach((x, i) => {
  if (x > 1855) return;
  vline(x, 146, 159, '#444');
  if (i > 0 && x <= 1500) {
    add('path', { d: `M${x - 4} 147h9l-3 10h-3z`, fill: '#ffa526' });
    vline(x, 147, 157, '#b97a1c');
    vline(x, 159, 162, '#b8c4d4');
  }
  const gap = marks[i + 1] - x;
  const parts = gap < 26 ? 4 : 8;
  for (let k = 1; k < parts; k++) {
    const tx = Math.round(x + gap * k / parts);
    if (tx < 1855) vline(tx, 147, k % 2 ? 150 : 153, '#444');
  }
});
[[64, 'Oct'], [124, '08:00'], [208, '16:00'], [282, '20:00'], [351, '02.10'], [435, '12:00'], [496, '16:00'],
 [570, '20:00'], [637, '03.10'], [703, '12:00'], [762, '16:00'], [836, '20:00'], [898, '06.10'], [956, '08:00'],
 [1068, '16:00'], [1142, '20:00'], [1199, '07.10'], [1255, '08:00'], [1348, '16:00'], [1423, '20:00'],
 [1499, '08.10']].forEach(([x, t]) => label(x, 140, t));

// bottom time scale
hline(1002, 0, 1856, '#444');
vline(0, 990, 1002, '#444');
for (let x = 63; x < 1855; x += 129) {
  vline(x, 990, 1002, '#444');
}
for (let k = -3; k < 112; k++) {
  const x = Math.round(63 + k * 129 / 8);
  if (x < 1855) vline(x, k % 2 ? 999 : 996, 1002, '#444');
}
label(0, 1024, '30.09.2014 19:53', 'start');
['01.10 15:07', '22:02', '02.10 13:15', '20:25', '03.10 12:26', '20:00', '06.10 09:18', '17:25'].forEach((t, i) => {
  label(191 + i * 129, 1024, t);
});
label(1235, 1024, '4:26', 'start');
['16:14', '23:03', '08.10 05:52', '12:41'].forEach((t, i) => label(1352 + i * 129, 1024, t));
add('rect', { x: 1114, y: 1007, width: 120, height: 20, fill: '#ff9900' });
label(1174, 1022, '06.10.2014 21:40', 'middle', 'dark');

// price scale
vline(1855, 146, 1003, '#444');
for (let k = -9; k < 60; k++) {
  const y = Math.round(277 + k * 11.88);
  const len = k % 10 === 0 ? 14 : k % 5 === 0 ? 7 : 4;
  hline(y, 1855 - len, 1855, '#444');
}
['4,050', '4,000', '3,950', '3,900', '3,850', '3,800', '3,750'].forEach((t, i) => {
  label(1858, 283 + Math.round(i * 118.8), t, 'start');
});
add('rect', { x: 1856, y: 564, width: 39, height: 20, fill: '#66ccff' });
label(1857, 579, '3,925', 'start', 'dark');
add('rect', { x: 1856, y: 800, width: 39, height: 20, fill: '#ff9900' });
label(1857, 815, '3,826', 'start', 'dark');

label(10, 173, 'PERIODIC TOOL(NGAS)', 'start', 'dark');
add('rect', { x: 19, y: 488, width: 128, height: 21, fill: '#dce9ce' });
label(24, 503, 'Long(06.10, - 25)', 'start', 'position');
```
